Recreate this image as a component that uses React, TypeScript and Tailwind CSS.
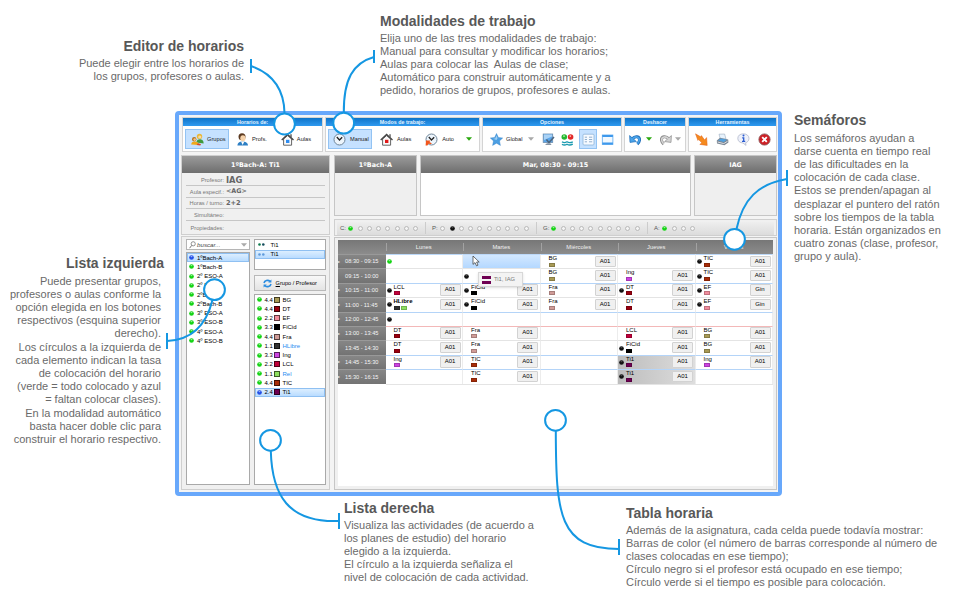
import React from "react";

const GREEN = "#14d414";
const BLUE = "#2450e8";
const K = "#111111";

const Dot = ({ c, s = 5 }: { c: string; s?: number }) => (
  <svg width={s} height={s} viewBox="0 0 6 6" className="shrink-0">
    <circle cx="3" cy="3" r="2.8" fill={c} />
    <ellipse cx="3" cy="1.9" rx="1.2" ry="0.7" fill="#fff" opacity={c === K ? 0.25 : 0.6} />
  </svg>
);

const Ring = () => <span className="h-[5px] w-[5px] shrink-0 rounded-full border border-[#b9b9b9] bg-[#f4f4f4]" />;

const Caret = ({ c }: { c: string }) => (
  <svg width="6" height="4" viewBox="0 0 6 4" className="shrink-0">
    <path d="M0 0.3H6L3 3.8Z" fill={c} />
  </svg>
);

const Svg = ({ children, w = 13 }: { children: React.ReactNode; w?: number }) => (
  <svg width={w} height="13" viewBox="0 0 13 13" className="shrink-0">
    {children}
  </svg>
);

const GroupIcon = () => (
  <Svg>
    <circle cx="8.5" cy="3.4" r="2.7" fill="#e9b838" />
    <circle cx="8.8" cy="4" r="1.6" fill="#f7d9a8" />
    <path d="M5.5 9.5C5.5 6.8 7 6.2 8.8 6.2S12.6 7 12.6 10.4Z" fill="#3f9a3c" />
    <circle cx="3.2" cy="6.2" r="2.2" fill="#b5741e" />
    <circle cx="3.7" cy="6.6" r="1.3" fill="#f2c48e" />
    <path d="M0.2 11.5C0.4 9 2 8.4 3.6 8.4S7.6 9 7.8 12Z" fill="#f0a818" />
    <path d="M5.6 12L7 10.2L10 10.9L9.3 12.4Z" fill="#d84a28" />
  </Svg>
);

const PersonIcon = () => (
  <Svg>
    <path d="M1.4 12.6C1.4 9.6 3.8 8.4 6.5 8.4S12 9.6 12 12.6Z" fill="#2d7fc4" />
    <path d="M5 8.4L6.6 12L8.4 8.4Z" fill="#fff" />
    <circle cx="6" cy="3.8" r="3.5" fill="#5c3a20" />
    <ellipse cx="6.9" cy="5.2" rx="2.6" ry="3" fill="#f6d3ab" />
  </Svg>
);

const HouseIcon = ({ c }: { c: string }) => (
  <Svg>
    <path d="M2.6 6V12.2H10.6V6L6.6 2.6Z" fill="#fafafa" stroke="#555" strokeWidth="0.9" />
    <path d="M0.7 7L6.6 1.5L12.5 7" fill="none" stroke="#444" strokeWidth="1.3" />
    <path d="M9.3 1.2H10.7V4.6L9.3 3.4Z" fill="#555" />
    <rect x="5" y="6.8" width="3.4" height="3.2" fill={c} />
  </Svg>
);

const ClockIcon = ({ auto = false }: { auto?: boolean }) => (
  <Svg>
    <circle cx="6.5" cy="6.5" r="5.5" fill="#edf5fc" stroke="#6d8498" strokeWidth="1" />
    <path d="M3.8 4L6.5 7L9.2 4.2" fill="none" stroke="#222" strokeWidth="1.3" />
    {auto && <path d="M1 7.4H5.4L4.5 9L7 10.4L5.2 11.3L3.8 10.6L2.4 12.6H0.6Z" fill="#f2561c" />}
  </Svg>
);

const StarIcon = () => (
  <Svg>
    <path d="M6.5 0.5L8.4 4.5L12.7 5L9.5 7.9L10.4 12.4L6.5 10.2L2.6 12.4L3.5 7.9L0.3 5L4.6 4.5Z" fill="#4c9fe2" stroke="#2f7fc8" strokeWidth="0.4" />
    <path d="M6.5 2.5L7.6 5.3L6.5 7L3 5.8L5.2 5.4Z" fill="#9fd0f5" />
  </Svg>
);

const CheckIcon = () => (
  <Svg>
    <rect x="1.2" y="1" width="9.5" height="8.5" fill="#5ba6ea" stroke="#6f8fae" strokeWidth="0.8" />
    <path d="M2 1.6H10V3.5L2 7Z" fill="#a9d2f6" />
    <path d="M4.4 6.5L7 9.6L12 4" fill="none" stroke="#4c6680" strokeWidth="1.6" />
    <path d="M3 12H9.6L8.4 10.2H5Z" fill="#8996a5" />
  </Svg>
);

const LightsIcon = () => (
  <Svg>
    <circle cx="3.3" cy="4" r="2.8" fill="#24b830" />
    <circle cx="9.6" cy="4" r="2.8" fill="#e02a2a" />
    <circle cx="3" cy="3.1" r="0.9" fill="#b8f3b8" />
    <circle cx="9.3" cy="3.1" r="0.9" fill="#ffb9b0" />
    <path d="M1 8.8Q3.3 10.4 6 8.8Q8.6 10.4 11.8 8.8M1 11.2Q3.3 12.8 6 11.2Q8.6 12.8 11.8 11.2" fill="none" stroke="#1b9bb0" strokeWidth="1.3" />
  </Svg>
);

const ListIcon = () => (
  <Svg>
    <rect x="1" y="1.2" width="11" height="10.8" rx="1" fill="#f6faff" stroke="#8eb4d8" strokeWidth="0.8" />
    <path d="M2.8 4.2H5M2.8 6.5H5M2.8 8.8H5M7 4.2H10.2M7 6.5H10.2M7 8.8H10.2" stroke="#87a7c8" strokeWidth="0.9" />
  </Svg>
);

const WinIcon = () => (
  <Svg>
    <rect x="1.3" y="2" width="10.6" height="9.4" fill="#f2f9ff" stroke="#5aaaf0" strokeWidth="0.8" />
    <path d="M1.3 3H11.9M1.3 10.4H11.9" stroke="#3d98ec" strokeWidth="2" />
  </Svg>
);

const ArrowBack = ({ c, d }: { c: string; d: string }) => (
  <>
    <path d="M3.2 5.8C6 2.6 11 3 10.5 7.4C10.3 9 9.5 10 8.3 11" fill="none" stroke={d} strokeWidth="3" />
    <path d="M0.6 2.6L1 9.4L7.4 8.6Z" fill={c} stroke={d} strokeWidth="0.7" />
    <path d="M3.4 5.8C6 3 10.6 3.2 10.3 7.3C10.2 8.8 9.4 9.8 8.3 10.8" fill="none" stroke={c} strokeWidth="1.6" />
  </>
);

const BoltIcon = () => (
  <Svg>
    <path d="M0.5 0.8L5.6 3.8L6.4 2.6L9.6 7L11.6 4.6L12.2 12.4L4.8 11.4L6.8 9.8L3.6 6.6L2.9 7.4Z" fill="#f58a1e" stroke="#e0601c" strokeWidth="0.5" />
  </Svg>
);

const PrinterIcon = () => (
  <Svg>
    <path d="M3 1.2L8.6 1L10 6L4.4 6.6Z" fill="#e7f2fc" stroke="#8a9db0" strokeWidth="0.5" />
    <path d="M0.8 7.4L4 4.8L12.2 6.4L12.4 9.4L8.4 12.3L1 10.5Z" fill="#7c8794" />
    <path d="M2 7.4L5 5.6L10.8 6.8L7.8 9Z" fill="#4ea0e0" />
    <path d="M1.6 9L7.8 10.6L11.6 8.2" fill="none" stroke="#d9dee3" strokeWidth="1" />
  </Svg>
);

const InfoIcon = () => (
  <Svg>
    <path d="M6.3 0.8C9.6 0.8 12 2.6 12 5.4C12 7.8 10.2 9.4 8.6 9.8L9 12.4L6 10C2.8 9.9 0.8 8 0.8 5.4C0.8 2.6 3 0.8 6.3 0.8Z" fill="#eef1fa" stroke="#a9b0c6" strokeWidth="0.7" />
    <circle cx="6.5" cy="2.6" r="1" fill="#2a5bd0" />
    <path d="M5.2 4.8H6.7V8M5 8.3H8.2" fill="none" stroke="#2a5bd0" strokeWidth="1.3" />
  </Svg>
);

const CloseIcon = () => (
  <Svg>
    <circle cx="6.5" cy="6.5" r="5.6" fill="#cf1f24" stroke="#8c5a5c" strokeWidth="0.9" />
    <path d="M4.2 4.2L8.8 8.8M8.8 4.2L4.2 8.8" stroke="#fff" strokeWidth="1.9" />
  </Svg>
);

const ToolGroup = ({ title, box, children }: { title: string; box: string; children: React.ReactNode }) => (
  <div className={`flex h-[35px] flex-col border border-[#d4d4d4] bg-white ${box}`}>
    <div className="h-[8px] bg-linear-to-b from-[#0d74c8] to-[#2f9af0] text-center text-[5.3px] leading-[8px] font-bold text-[#e4f3ff]">{title}</div>
    <div className="flex flex-1 items-center pt-px">{children}</div>
  </div>
);

const DarkHead = ({ children }: { children: React.ReactNode }) => (
  <div className="h-[17px] shrink-0 bg-linear-to-b from-[#9b9b9b] to-[#6e6e6e] text-center font-['DejaVu_Sans',sans-serif] text-[6.4px] leading-[18px] font-bold text-white">
    {children}
  </div>
);

const C: Record<string, string> = {
  BG: "#a89a55", DT: "#99000f", EF: "#f08c9c", FiCid: "#000000", Fra: "#d09c98", HLibre: "#333333",
  Ing: "#cc44e0", LCL: "#c0003a", Rel: "#8ee060", TIC: "#a82c08", Ti1: "#6e0052",
};

type Cell = { n?: string; dot?: string; room?: string; state?: string };
const c = (n: string, dot?: string, room = "A01", state?: string): Cell => ({ n, dot, room, state });
const e: Cell = {};
const rows: { t: string; line: string; mark: boolean; cells: Cell[] }[] = [
  { t: "08:30 - 09:15", line: "border-[#bcd8f8]", mark: true, cells: [{ dot: GREEN }, { state: "hot" }, c("BG"), e, c("TIC", K)] },
  { t: "09:15 - 10:00", line: "border-[#e4e4e4]", mark: false, cells: [e, { dot: K }, c("BG"), c("Ing"), c("TIC", K)] },
  { t: "10:15 - 11:00", line: "border-[#b4d4f8]", mark: true, cells: [c("LCL", K), c("FiCid", K), c("Fra"), c("DT", K), c("EF", K, "Gin")] },
  { t: "11:00 - 11:45", line: "border-[#e4e4e4]", mark: true, cells: [c("HLibre", K), c("FiCid", K), c("Fra"), c("DT"), c("EF", K, "Gin")] },
  { t: "12:00 - 12:45", line: "border-[#b4d4f8]", mark: true, cells: [{ dot: K }, e, e, e, e] },
  { t: "13:00 - 13:45", line: "border-[#f3b8b8]", mark: true, cells: [c("DT"), c("Fra"), e, c("LCL"), c("BG")] },
  { t: "13:45 - 14:30", line: "border-[#e4e4e4]", mark: false, cells: [c("DT"), c("Fra"), e, c("FiCid", K), c("BG")] },
  { t: "14:45 - 15:30", line: "border-[#b4d4f8]", mark: true, cells: [c("Ing"), c("TIC"), e, c("Ti1", K, "A01", "busy"), c("Ing")] },
  { t: "15:30 - 16:15", line: "border-[#b4d4f8]", mark: true, cells: [e, c("TIC"), e, c("Ti1", K, "A01", "busy"), e] },
];

const Bar = ({ col }: { col: string }) => (
  <span className="h-[4px] w-[6px] border border-black/20" style={{ backgroundColor: col }} />
);

const TableCell = ({ d, line }: { d: Cell; line: string }) => {
  const fill = d.state === "hot" ? "bg-linear-to-b from-[#d3e8ff] to-[#b4d8ff]" : d.state === "busy" ? "bg-linear-to-r from-[#bdbdbd] to-[#dedede]" : "bg-white";
  return (
    <div className={`flex h-full w-[77.5px] border-t border-r border-r-[#ececec] ${line} ${fill}`}>
      <div className="flex w-[8px] items-center pl-px">{d.dot && <Dot c={d.dot} />}</div>
      {d.n && (
        <>
          <div className="flex w-[46px] flex-col">
            <span className={`h-[7.5px] text-[6px] leading-[7px] text-black ${d.n === "HLibre" ? "font-bold" : ""}`}>{d.n}</span>
            <span className="flex gap-px">
              <Bar col={C[d.n]} />
              {d.n === "HLibre" && <Bar col={C.Rel} />}
            </span>
          </div>
          <div className="mt-[0.5px] h-[11.5px] w-[21px] rounded-[1px] border border-[#d2d2d2] bg-[#f0f0f0] text-center text-[6px] leading-[9.5px] text-black">{d.room}</div>
        </>
      )}
    </div>
  );
};

const Lights = ({ label, items, box }: { label: string; items: string; box: string }) => (
  <div className={`flex h-[12px] items-center gap-[4.27px] ${box}`}>
    <span className="-mr-[3px] w-[7px] text-[6px] text-[#555]">{label}</span>
    {items.split("").map((k, i) => (k === "o" ? <Ring key={i} /> : <Dot key={i} c={k === "g" ? GREEN : K} />))}
  </div>
);

const classes = ["1ºBach-A", "1ºBach-B", "2º ESO-A", "2º ESO-B", "2ºBach-A", "2ºBach-B", "3º ESO-A", "3º ESO-B", "4º ESO-A", "4º ESO-B"];
const subjects: [string, string][] = [
  ["4.4", "BG"], ["4.4", "DT"], ["2.2", "EF"], ["3.3", "FiCid"], ["4.4", "Fra"], ["1.1", "HLibre"],
  ["3.3", "Ing"], ["2.2", "LCL"], ["1.1", "Rel"], ["4.4", "TIC"], ["2.4", "Ti1"],
];
const selected = "border-[#8fc0f2] bg-linear-to-b from-[#dceeff] to-[#b9dcff]";

const Note = ({ title, lines, box, titleBox = "h-[18.5px]" }: { title: string; lines: string[]; box: string; titleBox?: string }) => (
  <div className={`shrink-0 whitespace-pre text-[11px] leading-[13.2px] text-[#6a6a6a] ${box}`}>
    <h2 className={`text-[14px] leading-[16px] font-bold text-[#585858] ${titleBox}`}>{title}</h2>
    {lines.map((l) => (
      <div key={l}>{l}</div>
    ))}
  </div>
);

const Toolbar = () => (
  <div className="flex gap-[2px] pl-[3px] text-[5.7px] text-[#222]">
    <ToolGroup title="Horarios de:" box="w-[141px]">
      <div className="ml-[2px] flex h-[20px] w-[44px] items-center gap-[3px] border border-[#93c3f3] bg-[#c5e1ff] pl-[5px]">
        <GroupIcon />Grupos
      </div>
      <div className="ml-[7px] flex items-center gap-[3px]"><PersonIcon />Profs.</div>
      <div className="ml-[14px] flex items-center gap-[3px]"><HouseIcon c="#2e8cf0" />Aulas</div>
    </ToolGroup>
    <ToolGroup title="Modos de trabajo:" box="w-[155px]">
      <div className="ml-[2px] flex h-[20px] w-[44px] items-center gap-[4px] border border-[#93c3f3] bg-[#c5e1ff] pl-[4px]">
        <ClockIcon />Manual
      </div>
      <div className="ml-[8px] flex items-center gap-[4px]"><HouseIcon c="#e01818" />Aulas</div>
      <div className="ml-[14px] flex items-center gap-[4px]"><ClockIcon auto />Auto</div>
      <div className="ml-[12px]"><Caret c="#2aa80e" /></div>
    </ToolGroup>
    <ToolGroup title="Opciones" box="w-[140px]">
      <div className="ml-[7px] flex items-center gap-[3px]"><StarIcon />Global</div>
      <div className="ml-[6px]"><Caret c="#a9a9a9" /></div>
      <div className="ml-[8px] flex items-center gap-[6px]"><CheckIcon /><LightsIcon /></div>
      <div className="ml-[5px] flex h-[20px] w-[18px] items-center justify-center border border-[#93c3f3] bg-[#c5e1ff]"><ListIcon /></div>
      <div className="ml-[4px]"><WinIcon /></div>
    </ToolGroup>
    <ToolGroup title="Deshacer" box="w-[62px]">
      <div className="ml-[4px]"><Svg><ArrowBack c="#4aa4ea" d="#1f6db8" /></Svg></div>
      <div className="ml-[4px]"><Caret c="#2aa80e" /></div>
      <div className="ml-[7px]"><Svg><g transform="translate(13 0) scale(-1 1)"><ArrowBack c="#d4d4d4" d="#8b8b8b" /></g></Svg></div>
      <div className="ml-[3px]"><Caret c="#a9a9a9" /></div>
    </ToolGroup>
    <ToolGroup title="Herramientas" box="w-[89px]">
      <div className="flex gap-[8px] pl-[6px]"><BoltIcon /><PrinterIcon /><InfoIcon /><CloseIcon /></div>
    </ToolGroup>
  </div>
);

const info: [string, string, string][] = [
  ["Profesor:", "IAG", "text-[8.4px]"], ["Aula especif.:", "<AG>", "text-[6.4px]"], ["Horas / turno:", "2+2", "text-[6.6px]"],
  ["Simultáneo:", "", ""], ["Propiedades:", "", ""],
];

const LeftSide = () => (
  <div className="flex w-[149px] flex-col gap-px">
    <div className="flex h-[80px] flex-col border border-[#cfcfcf] bg-[#f0f0f0]">
      <DarkHead>1ºBach-A: Ti1</DarkHead>
      <div className="flex flex-col px-[4px] pt-px">
        {info.map(([k, v, s], i) => (
          <div key={k} className={`flex h-[11.8px] items-center border-[#c6c6c6] pt-[1.5px] ${i < 4 ? "border-b" : ""}`}>
            <span className="w-[38px] text-right text-[5.7px] text-[#777]">{k}</span>
            <span className={`pl-[2px] font-['DejaVu_Sans',sans-serif] leading-[9px] font-bold text-[#666] ${s}`}>{v}</span>
          </div>
        ))}
      </div>
    </div>
    <div className="flex flex-1 gap-[4px] border border-[#cfcfcf] bg-[#f0f0f0] pt-[2px] pr-[3px] pb-[4px] pl-[4px] text-[6px] text-black">
      <div className="flex w-[64px] flex-col gap-[2px]">
        <div className="flex h-[11px] items-center border border-[#b5b5b5] bg-white px-[2px]">
          <svg width="7" height="8" viewBox="0 0 7 8"><circle cx="4.2" cy="2.8" r="2.1" fill="none" stroke="#777" strokeWidth="0.8" /><path d="M2.7 4.4L0.6 7.2" stroke="#777" /></svg>
          <span className="flex-1 pl-px text-[6.2px] text-[#444] italic">buscar...</span>
          <Caret c="#aaa" />
        </div>
        <div className="flex flex-1 flex-col border border-[#a9a9a9] bg-white">
          {classes.map((n, i) => (
            <div key={n} className={`flex h-[9.25px] items-center gap-[3px] border pl-px ${i === 0 ? selected : "border-transparent"}`}>
              <Dot c={i === 0 ? BLUE : GREEN} />
              <span className="leading-[8px]">{n}</span>
            </div>
          ))}
        </div>
      </div>
      <div className="flex w-[73px] flex-col">
        <div className="h-[31px] border border-[#a9a9a9] bg-white">
          {[0, 1].map((i) => (
            <div key={i} className={`flex h-[9.5px] items-center border pl-[2px] ${i ? selected : "border-transparent"}`}>
              <svg width="7" height="3" viewBox="0 0 7 3"><circle cx="1.5" cy="1.5" r="1.3" fill={i ? "#5f9bdc" : "#0b7a4c"} /><circle cx="5.3" cy="1.5" r="1.3" fill={i ? "#5f9bdc" : "#124b5c"} /></svg>
              <span className="pl-[6px] leading-[8px]">Ti1</span>
            </div>
          ))}
        </div>
        <div className="mt-[5px] flex h-[16px] items-center justify-center gap-[4px] border border-[#b9b9b9] bg-linear-to-b from-[#f8f8f8] to-[#e4e4e4] text-[5.6px]">
          <svg width="9" height="9" viewBox="0 0 9 9" fill="none" stroke="#2c8de0" strokeWidth="1.6"><path d="M1 4C1.6 1.4 5 0.4 7 2.4M8 5C7.4 7.6 4 8.6 2 6.6" /><path d="M8.4 0.4V3.6H5.2ZM0.6 8.6V5.4H3.8Z" fill="#2c8de0" stroke="none" /></svg>
          <span><u>G</u>rupo / Profesor</span>
        </div>
        <div className="mt-[3px] flex flex-1 flex-col border border-[#a9a9a9] bg-white">
          {subjects.map(([num, n], i) => (
            <div key={n} className={`flex h-[9.25px] items-center border pl-px ${i === 10 ? selected : "border-transparent"}`}>
              <Dot c={i === 10 ? BLUE : GREEN} />
              <span className="w-[12px] pl-[3px] leading-[8px]">{num}</span>
              <span className="h-[6px] w-[6px] border border-black/60" style={{ backgroundColor: C[n] }} />
              <span className={`pl-[3px] leading-[8px] ${n === "HLibre" || n === "Rel" ? "text-[#2b8cf0]" : ""}`}>{n}</span>
            </div>
          ))}
        </div>
      </div>
    </div>
  </div>
);

const RightSide = () => (
  <div className="flex w-[443px] flex-col">
    <div className="flex h-[61px] gap-[3px]">
      <div className="w-[83px] border border-[#c6c6c6] bg-[#efefef]"><DarkHead>1ºBach-A</DarkHead></div>
      <div className="w-[272px] border border-[#c6c6c6] bg-white"><DarkHead>Mar, 08:30 - 09:15</DarkHead></div>
      <div className="w-[83px] border border-[#c6c6c6] bg-[#efefef]"><DarkHead>IAG</DarkHead></div>
    </div>
    <div className="mt-[3px] flex h-[17px] items-center border border-[#cfcfcf] bg-[#f0f0f0] px-[2px] pt-px">
      <div className="flex h-[13px] flex-1 items-center bg-linear-to-b from-[#eeeeee] to-[#dcdcdc]">
        <Lights label="C:" items="gooooooo" box="w-[88px] pl-[3px]" />
        <Lights label="P:" items="oboooooooo" box="w-[111px] border-l border-[#cccccc] pl-[6px]" />
        <Lights label="G:" items="gooooooooo" box="w-[111px] border-l border-[#cccccc] pl-[6px]" />
        <Lights label="A:" items="gooo" box="flex-1 border-l border-[#cccccc] pl-[6px]" />
      </div>
    </div>
    <div className="mt-px flex flex-1 flex-col border border-[#c6c6c6] bg-[#f0f0f0] pt-[2px] pr-[3px] pb-[3px] pl-[3px]">
      <div className="flex flex-1 flex-col bg-white">
        <div className="flex h-[14px] bg-linear-to-b from-[#777] to-[#8c8c8c] text-[5.8px] text-[#f0f0f0]">
          <div className="w-[47.5px]" />
          {["Lunes", "Martes", "Miércoles", "Jueves", "Viernes"].map((d) => (
            <div key={d} className="my-[3px] w-[77.5px] border-l border-[#a2a2a2] pr-[2px] text-center leading-[8px]">{d}</div>
          ))}
        </div>
        {rows.map((r) => (
          <div key={r.t} className="flex h-[14.4px]">
            <div className="flex w-[47.5px] items-center border-t border-[#999] bg-linear-to-b from-[#868686] to-[#737373] text-[5.7px] text-[#f4f4f4]">
              <span className="w-[7px] text-[4px]">{r.mark ? "▸" : ""}</span>
              {r.t}
            </div>
            {r.cells.map((d, i) => (
              <TableCell key={i} d={d} line={r.line} />
            ))}
          </div>
        ))}
        <div className="ml-[47.5px] h-px bg-[#e4e4e4]" />
      </div>
    </div>
  </div>
);

const links = [
  { tick: "M251 59V73", path: "M251 66C271 73 284 88 284.5 113", x: 284.5, y: 124 },
  { tick: "M374 50V63", path: "M374 57C353 63 343.5 79 343.8 113", x: 343.7, y: 123.2 },
  { tick: "M787 170V186", path: "M787 179C758 184 743 199 736.5 229", x: 734.5, y: 239.3 },
  { tick: "M167 333V349", path: "M167 341C191 340 206 326 212.5 300", x: 214.5, y: 289.7 },
  { tick: "M339 513V529", path: "M270.8 451C272 495 288 523 339 521", x: 270.5, y: 440.3 },
  { tick: "M619 539V555", path: "M555.8 431C556 515 559 549 619 549", x: 555.5, y: 420.3 },
];

export default function App() {
  return (
    <div className="relative flex h-[600px] w-[960px] flex-col overflow-hidden bg-white font-['Liberation_Sans',Arial,sans-serif]">
      <div className="flex h-[111px]">
        <Note title="Editor de horarios" box="w-[244px] pt-[38px] text-right" lines={["Puede elegir entre los horarios de", "los grupos, profesores o aulas."]} />
        <Note
          title="Modalidades de trabajo"
          box="ml-[136px] pt-[13px]"
          lines={["Elija uno de las tres modalidades de trabajo:", "Manual para consultar y modificar los horarios;", "Aulas para colocar las  Aulas de clase;", "Automático para construir automáticamente y a", "pedido, horarios de grupos, profesores e aulas."]}
        />
      </div>
      <div className="flex h-[385px]">
        <Note
          title="Lista izquierda"
          box="w-[175px] pt-[144px] pr-[14px] text-right"
          titleBox="-mr-[3px] h-[19.5px]"
          lines={["Puede presentar grupos,", "profesores o aulas conforme la", "opción elegida en los botones", "respectivos (esquina superior", "derecho).", "Los círculos a la izquierda de", "cada elemento indican la tasa", "de colocación del horario", "(verde = todo colocado y azul", "= faltan colocar clases).", "En la modalidad automático", "basta hacer doble clic para", "construir el horario respectivo."]}
        />
        <div className="flex w-[607px] flex-col rounded-[4px] border-4 border-[#68a8fb] bg-[#f4f4f4] pt-[2px] pb-[2px]">
          <Toolbar />
          <div className="mt-[3px] flex flex-1 gap-[4px] pl-[2px]">
            <LeftSide />
            <RightSide />
          </div>
        </div>
        <Note
          title="Semáforos"
          box="ml-[12px] pt-px"
          titleBox="h-[19.5px]"
          lines={["Los semáforos ayudan a", "darse cuenta en tiempo real", "de las dificultades en la", "colocación de cada clase.", "Estos se prenden/apagan al", "desplazar el puntero del ratón", "sobre los tiempos de la tabla", "horaria. Están organizados en", "cuatro zonas (clase, profesor,", "grupo y aula)."]}
        />
      </div>
      <div className="flex flex-1">
        <Note title="Lista derecha" box="ml-[344px] w-[282px] pt-[4px]" lines={["Visualiza las actividades (de acuerdo a", "los planes de estudio) del horario", "elegido a la izquierda.", "El círculo a la izquierda señaliza el", "nivel de colocación de cada actividad."]} />
        <Note title="Tabla horaria" box="pt-[9px]" lines={["Además de la asignatura, cada celda puede todavía mostrar:", "Barras de color (el número de barras corresponde al número de", "clases colocadas en ese tiempo);", "Círculo negro si el profesor está ocupado en ese tiempo;", "Círculo verde si el tiempo es posible para colocación."]} />
      </div>

      <div className="absolute top-[272px] left-[478px] flex h-[15px] w-[45px] items-center gap-[3px] border border-[#d8d8d8] bg-[#f3f3f3] pl-[3px] text-[5.8px] text-[#777] shadow">
        <span className="flex flex-col gap-[2px]">
          <span className="h-[3px] w-[9px] bg-[#6e0052]" />
          <span className="h-[3px] w-[9px] bg-[#6e0052]" />
        </span>
        Ti1, IAG
      </div>
      <svg className="absolute top-[255px] left-[472px]" width="9" height="12" viewBox="0 0 9 12">
        <path d="M1 1V9.4L3 7.6L4.5 10.8L6 10.1L4.6 7H7.2Z" fill="#fff" stroke="#333" strokeWidth="0.7" />
      </svg>
      <svg className="absolute inset-0" width="960" height="600" viewBox="0 0 960 600" fill="none" stroke="#1597e2" strokeWidth="2">
        {links.map((l) => (
          <g key={l.tick}>
            <path d={l.tick} />
            <path d={l.path} />
            <circle cx={l.x} cy={l.y} r="10.4" fill="#fff" />
          </g>
        ))}
      </svg>
    </div>
  );
}
